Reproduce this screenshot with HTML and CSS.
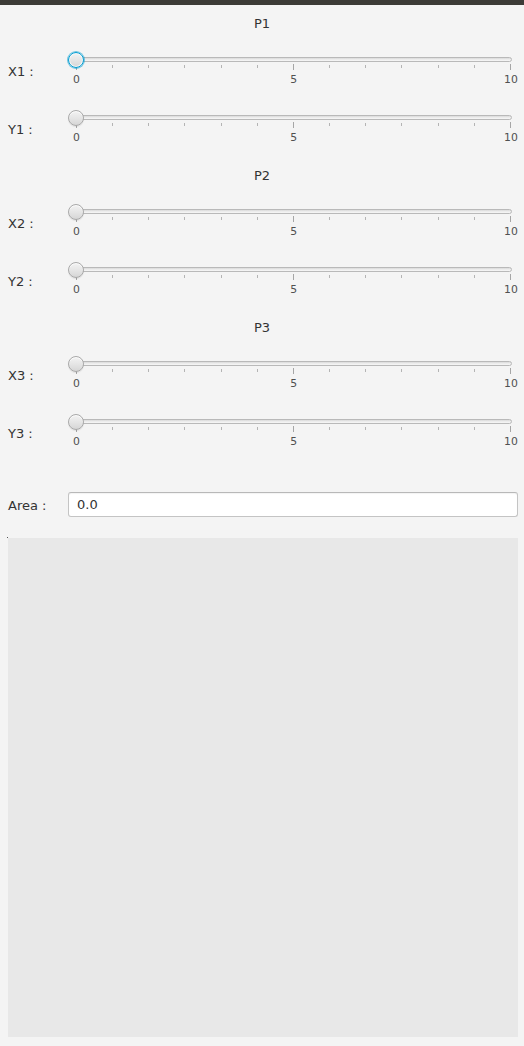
FILE: index.html
```html
<!DOCTYPE html>
<html>
<head>
<meta charset="utf-8">
<link rel="stylesheet" href="styles.css">
</head>
<body>
<div class="topbar"></div>
<main class="form">
  <section class="group">
    <div class="title">P1</div>
    <div class="row">
      <span class="lbl">X1 :</span>
      <div class="slider focused">
        <div class="track"></div>
        <div class="ticks"><i class="major"></i><i></i><i></i><i></i><i></i><i></i><i class="major"></i><i></i><i></i><i></i><i></i><i></i><i class="major"></i></div>
        <div class="nums"><span>0</span><span>5</span><span>10</span></div>
        <div class="thumb"></div>
      </div>
    </div>
    <div class="row">
      <span class="lbl">Y1 :</span>
      <div class="slider">
        <div class="track"></div>
        <div class="ticks"><i class="major"></i><i></i><i></i><i></i><i></i><i></i><i class="major"></i><i></i><i></i><i></i><i></i><i></i><i class="major"></i></div>
        <div class="nums"><span>0</span><span>5</span><span>10</span></div>
        <div class="thumb"></div>
      </div>
    </div>
  </section>
  <section class="group">
    <div class="title">P2</div>
    <div class="row">
      <span class="lbl">X2 :</span>
      <div class="slider">
        <div class="track"></div>
        <div class="ticks"><i class="major"></i><i></i><i></i><i></i><i></i><i></i><i class="major"></i><i></i><i></i><i></i><i></i><i></i><i class="major"></i></div>
        <div class="nums"><span>0</span><span>5</span><span>10</span></div>
        <div class="thumb"></div>
      </div>
    </div>
    <div class="row">
      <span class="lbl">Y2 :</span>
      <div class="slider">
        <div class="track"></div>
        <div class="ticks"><i class="major"></i><i></i><i></i><i></i><i></i><i></i><i class="major"></i><i></i><i></i><i></i><i></i><i></i><i class="major"></i></div>
        <div class="nums"><span>0</span><span>5</span><span>10</span></div>
        <div class="thumb"></div>
      </div>
    </div>
  </section>
  <section class="group">
    <div class="title">P3</div>
    <div class="row">
      <span class="lbl">X3 :</span>
      <div class="slider">
        <div class="track"></div>
        <div class="ticks"><i class="major"></i><i></i><i></i><i></i><i></i><i></i><i class="major"></i><i></i><i></i><i></i><i></i><i></i><i class="major"></i></div>
        <div class="nums"><span>0</span><span>5</span><span>10</span></div>
        <div class="thumb"></div>
      </div>
    </div>
    <div class="row">
      <span class="lbl">Y3 :</span>
      <div class="slider">
        <div class="track"></div>
        <div class="ticks"><i class="major"></i><i></i><i></i><i></i><i></i><i></i><i class="major"></i><i></i><i></i><i></i><i></i><i></i><i class="major"></i></div>
        <div class="nums"><span>0</span><span>5</span><span>10</span></div>
        <div class="thumb"></div>
      </div>
    </div>
  </section>
  <div class="area-row">
    <span class="lbl area-lbl">Area :</span>
    <div class="field">0.0</div>
  </div>
  <div class="canvas"></div>
</main>
</body>
</html>
```
FILE: styles.css
```css
html, body {
  margin: 0;
  padding: 0;
}
body {
  background: #f4f4f4;
  font-family: "DejaVu Sans", "Liberation Sans", sans-serif;
  font-size: 13px;
  color: #333333;
  width: 524px;
  height: 1046px;
  overflow: hidden;
}
.topbar {
  height: 5px;
  background: #3c3b37;
}
.form {
  padding-top: 11px;
  display: flex;
  flex-direction: column;
}
.group {
  display: flex;
  flex-direction: column;
}
.title {
  height: 15px;
  line-height: 15px;
  text-align: center;
  margin-bottom: 21px;
}
.row {
  display: flex;
  height: 58px;
  padding: 0 5px 0 8px;
}
.lbl {
  width: 60px;
  flex: none;
  line-height: 15px;
  height: 15px;
  margin-top: 12px;
  white-space: nowrap;
}
.slider {
  position: relative;
  flex: 1;
  display: flex;
  flex-direction: column;
}
.track {
  height: 5px;
  margin: 5px 7px 0 2px;
  box-sizing: border-box;
  border: 1px solid #b9b9b9;
  border-radius: 3px;
  background: linear-gradient(to bottom, #d9d9d9 0%, #eeeeee 55%, #f6f6f6 100%);
}
.ticks {
  display: flex;
  justify-content: space-between;
  align-items: flex-start;
  height: 6px;
  margin: 2px 8px 0 8px;
}
.ticks i {
  display: block;
  width: 1px;
  height: 3px;
  margin-top: 1px;
  background: #b4b4b4;
}
.ticks i.major {
  height: 6px;
  margin-top: 0;
  background: #a6a6a6;
}
.nums {
  display: flex;
  justify-content: space-between;
  margin: 3px 8px 0 8.5px;
  height: 13px;
  line-height: 13px;
  font-size: 10.83px;
  color: #505050;
}
.nums span {
  width: 0;
  display: flex;
  justify-content: center;
  white-space: nowrap;
}
.thumb {
  position: absolute;
  left: 0;
  top: 0;
  width: 16px;
  height: 16px;
  box-sizing: border-box;
  border-radius: 50%;
  border: 1px solid #a9a9a9;
  background: linear-gradient(to bottom, #f3f3f3 0%, #e4e4e4 55%, #d6d6d6 100%);
  box-shadow: inset 0 1px 0 rgba(255,255,255,0.8), 0 1px 1px rgba(0,0,0,0.08);
}
.slider.focused .thumb {
  border: 1px solid #039ed3;
  box-shadow: 0 0 0 1px rgba(3,158,211,0.55), inset 0 0 0 1px #f7f7f7;
}
.area-row {
  display: flex;
  align-items: flex-start;
  margin-top: 20px;
  padding: 0 6px 0 8px;
}
.area-lbl {
  margin-top: 6px;
}
.field {
  flex: 1;
  height: 25px;
  box-sizing: border-box;
  border: 1px solid #c4c4c4;
  border-top-color: #b8b8b8;
  border-radius: 3px;
  background: #ffffff;
  box-shadow: inset 0 1px 1px rgba(0,0,0,0.05);
  padding: 4px 8px;
  line-height: 15px;
  color: #333333;
}
.canvas {
  position: relative;
  margin: 21px 6px 0 8px;
  height: 499px;
  background: #e8e8e8;
}
.canvas::before {
  content: "";
  position: absolute;
  left: -1px;
  top: -1px;
  width: 1px;
  height: 1px;
  background: #555555;
}
```
